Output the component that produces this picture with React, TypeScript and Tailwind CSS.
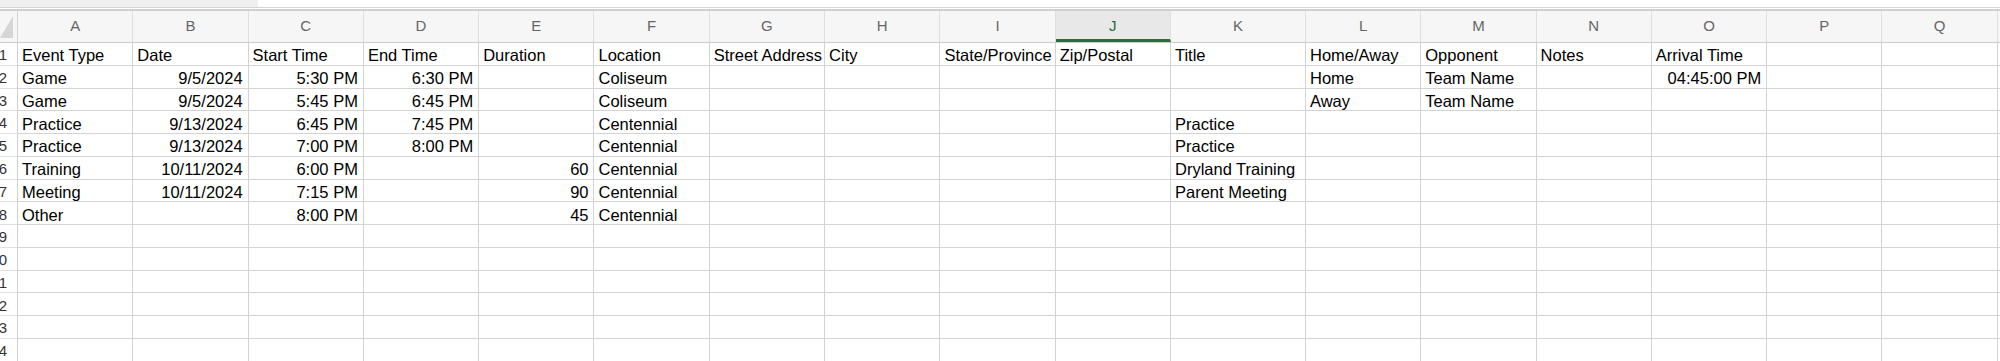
const cols = [
  { l: "A", wide: false },
  { l: "B", wide: false },
  { l: "C", wide: false },
  { l: "D", wide: false },
  { l: "E", wide: false },
  { l: "F", wide: false },
  { l: "G", wide: false },
  { l: "H", wide: false },
  { l: "I", wide: false },
  { l: "J", wide: false },
  { l: "K", wide: true },
  { l: "L", wide: false },
  { l: "M", wide: false },
  { l: "N", wide: false },
  { l: "O", wide: false },
  { l: "P", wide: false },
  { l: "Q", wide: false },
];

const data: string[][] = [
  ["Event Type", "Date", "Start Time", "End Time", "Duration", "Location", "Street Address", "City", "State/Province", "Zip/Postal", "Title", "Home/Away", "Opponent", "Notes", "Arrival Time"],
  ["Game", "9/5/2024", "5:30 PM", "6:30 PM", "", "Coliseum", "", "", "", "", "", "Home", "Team Name", "", "04:45:00 PM"],
  ["Game", "9/5/2024", "5:45 PM", "6:45 PM", "", "Coliseum", "", "", "", "", "", "Away", "Team Name"],
  ["Practice", "9/13/2024", "6:45 PM", "7:45 PM", "", "Centennial", "", "", "", "", "Practice"],
  ["Practice", "9/13/2024", "7:00 PM", "8:00 PM", "", "Centennial", "", "", "", "", "Practice"],
  ["Training", "10/11/2024", "6:00 PM", "", "60", "Centennial", "", "", "", "", "Dryland Training"],
  ["Meeting", "10/11/2024", "7:15 PM", "", "90", "Centennial", "", "", "", "", "Parent Meeting"],
  ["Other", "", "8:00 PM", "", "45", "Centennial"],
];

const rowCount = 14;

function colWidth(wide: boolean) {
  return wide ? "w-[135px]" : "w-[115.3px]";
}

function Corner() {
  return (
    <div className="w-[18px] shrink-0 h-full border-r border-[#d4d4d4] flex items-end">
      <svg width="17" height="31" viewBox="0 0 17 31">
        <polygon points="13,5 13,27 0,27" fill="#d6d6d6" />
      </svg>
    </div>
  );
}

function HeaderRow() {
  return (
    <div className="flex h-[32px] bg-[#f6f6f6] border-b border-[#cccccc]">
      <Corner />
      {cols.map((c) => {
        const sel = c.l === "J";
        return (
          <div
            key={c.l}
            className={`${colWidth(c.wide)} shrink-0 h-full flex items-center justify-center border-r border-[#e0e0e0] text-[15px] ${
              sel ? "bg-[#e8e8e8] text-[#1d6b3a] border-b-[3px] border-b-[#2e6b3f] pt-[3px]" : "text-[#666666]"
            }`}
          >
            {c.l}
          </div>
        );
      })}
      <div className="flex-1" />
    </div>
  );
}

function DataRow({ n, cells }: { n: number; cells: string[] }) {
  return (
    <div className="flex h-[22.77px]">
      <div className="w-[18px] shrink-0 h-full overflow-hidden flex items-center justify-end pr-[10px] pt-[3px] border-r border-[#d0d0d0] border-b border-b-[#e0e0e0] text-[15px] text-[#333333]">
        {n}
      </div>
      {cols.map((c, i) => {
        const v = cells[i] ?? "";
        const right = /^\d/.test(v);
        return (
          <div
            key={c.l}
            className={`${colWidth(c.wide)} shrink-0 h-full flex items-end border-r border-b border-[#d3d3d3] leading-[18px] pb-[0.5px] whitespace-nowrap ${
              right ? "justify-end pr-[5px]" : "justify-start pl-[4px]"
            }`}
          >
            {v}
          </div>
        );
      })}
      <div className="flex-1 border-b border-[#d3d3d3]" />
    </div>
  );
}

export default function App() {
  return (
    <div className="w-[2000px] h-[361px] overflow-hidden bg-white font-['Liberation_Sans',Arial,sans-serif] text-[16.5px] text-black">
      <div className="flex h-[8px] border-b border-[#d6d6d6]">
        <div className="w-[258px] bg-[#efefef]" />
        <div className="flex-1 bg-white" />
      </div>
      <div className="h-[1px] bg-white" />
      <div className="h-[2px] bg-[#cfcfcf]" />
      <HeaderRow />
      {Array.from({ length: rowCount }, (_, r) => (
        <DataRow key={r} n={r + 1} cells={data[r] ?? []} />
      ))}
    </div>
  );
}
